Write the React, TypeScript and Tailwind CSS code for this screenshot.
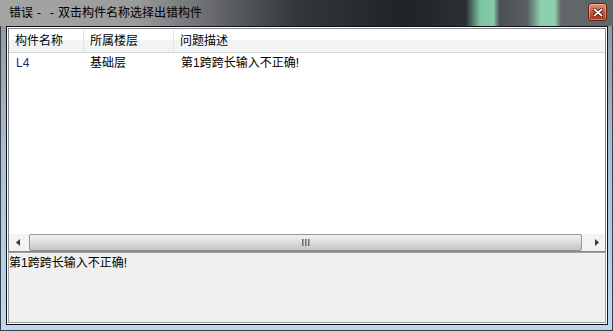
import React from 'react';

const FONT = { fontFamily: '"Liberation Sans", "Noto Sans CJK SC", sans-serif' };

interface ErrorRow {
  name: string;
  floor: string;
  desc: string;
}

const rows: ErrorRow[] = [{ name: 'L4', floor: '基础层', desc: '第1跨跨长输入不正确!' }];

function CloseButton() {
  return (
    <div className="mt-[3px] w-[19px] h-[18px] rounded-[3px] border border-[#5a2416] bg-gradient-to-b from-[#e8947c] via-[#cf5536] to-[#b0321a] flex items-center justify-center shadow-[inset_0_0_0_1px_rgba(255,190,170,0.55)]">
      <svg width="10" height="9" viewBox="0 0 10 9">
        <path d="M1.5 1.5 L8.5 7.5 M8.5 1.5 L1.5 7.5" stroke="#3a1a10" strokeWidth="3.4" strokeLinecap="square" />
        <path d="M1.5 1.5 L8.5 7.5 M8.5 1.5 L1.5 7.5" stroke="#ffffff" strokeWidth="1.7" strokeLinecap="square" />
      </svg>
    </div>
  );
}

function HScrollBar() {
  return (
    <div className="h-[17px] flex items-stretch bg-[#f3f3f3]">
      <div className="w-[17px] flex items-center justify-center">
        <svg width="4" height="7" viewBox="0 0 4 7">
          <path d="M4 0 L0 3.5 L4 7 Z" fill="#3a3a3a" />
        </svg>
      </div>
      <div className="flex-1 pl-[3px] pr-[6px] flex items-stretch">
        <div className="flex-1 rounded-[2px] border border-[#959595] bg-gradient-to-b from-[#f2f2f2] via-[#dcdcdc] to-[#c4c4c4] flex items-center justify-center">
          <div className="flex gap-px">
            <div className="w-[2px] h-[7px] bg-gradient-to-r from-[#555] to-[#bbb]" />
            <div className="w-[2px] h-[7px] bg-gradient-to-r from-[#555] to-[#bbb]" />
            <div className="w-[2px] h-[7px] bg-gradient-to-r from-[#555] to-[#bbb]" />
          </div>
        </div>
      </div>
      <div className="w-[17px] flex items-center justify-center">
        <svg width="4" height="7" viewBox="0 0 4 7">
          <path d="M0 0 L4 3.5 L0 7 Z" fill="#3a3a3a" />
        </svg>
      </div>
    </div>
  );
}

export default function App() {
  return (
    <div
      className="w-[613px] h-[331px] border border-[#3c3f44] flex flex-col bg-gradient-to-b from-[#8f9397] via-[#a9c3dd] to-[#bcd8f2] text-[12px] text-black"
      style={FONT}
    >
      {/* Title bar */}
      <div className="h-[26px] -mx-px -mt-px pl-[9px] pr-[6px] flex items-start justify-between bg-[linear-gradient(to_right,#a5a5a5_0%,#9b9b9b_22%,#6a6c6e_34%,#34383c_48%,#1f2327_66%,#2c3034_76%,#7cc3a0_78.3%,#86caa6_80.5%,#4a5054_81.5%,#5c6064_86%,#8ccfae_88.2%,#8ccfae_90.5%,#62666a_91.5%,#62666a_100%)]">
        <span className="leading-[14px] pt-[6px] flex">
          <span>错误</span>
          <span className="ml-[4px]">-</span>
          <span className="ml-[9px]">-</span>
          <span className="ml-[4px]">双击构件名称选择出错构件</span>
        </span>
        <CloseButton />
      </div>

      {/* Client area */}
      <div className="flex-1 ml-[5px] mr-[4px] mb-[5px] border border-[#111] bg-white p-px flex flex-col">
        {/* List view */}
        <div className="h-[224px] border border-[#828790] bg-white flex flex-col">
          <div className="h-[24px] pt-px flex border-b border-[#d5d5d5] bg-[linear-gradient(to_bottom,#ffffff_0%,#ffffff_45%,#f2f3f5_50%,#f2f3f5_100%)]">
            <div className="w-[75px] pl-[6px] flex items-center border-r border-[#e3e4e6] leading-[14px]">构件名称</div>
            <div className="w-[90px] pl-[6px] flex items-center border-r border-[#e3e4e6] leading-[14px]">所属楼层</div>
            <div className="flex-1 pl-[6px] flex items-center leading-[14px]">问题描述</div>
          </div>
          {rows.map((r) => (
            <div key={r.name} className="h-[18px] pt-px flex items-center leading-[14px]">
              <div className="w-[75px] pl-[7px] text-[#1c2a70]">{r.name}</div>
              <div className="w-[90px] pl-[6px]">{r.floor}</div>
              <div className="flex-1 pl-[7px]">{r.desc}</div>
            </div>
          ))}
          <div className="flex-1" />
          <HScrollBar />
        </div>

        {/* Message panel */}
        <div className="flex-1 border border-[#a0a0a0] bg-[#f0f0f0]">
          <div className="pt-[3px] leading-[14px]">第1跨跨长输入不正确!</div>
        </div>
      </div>
    </div>
  );
}
